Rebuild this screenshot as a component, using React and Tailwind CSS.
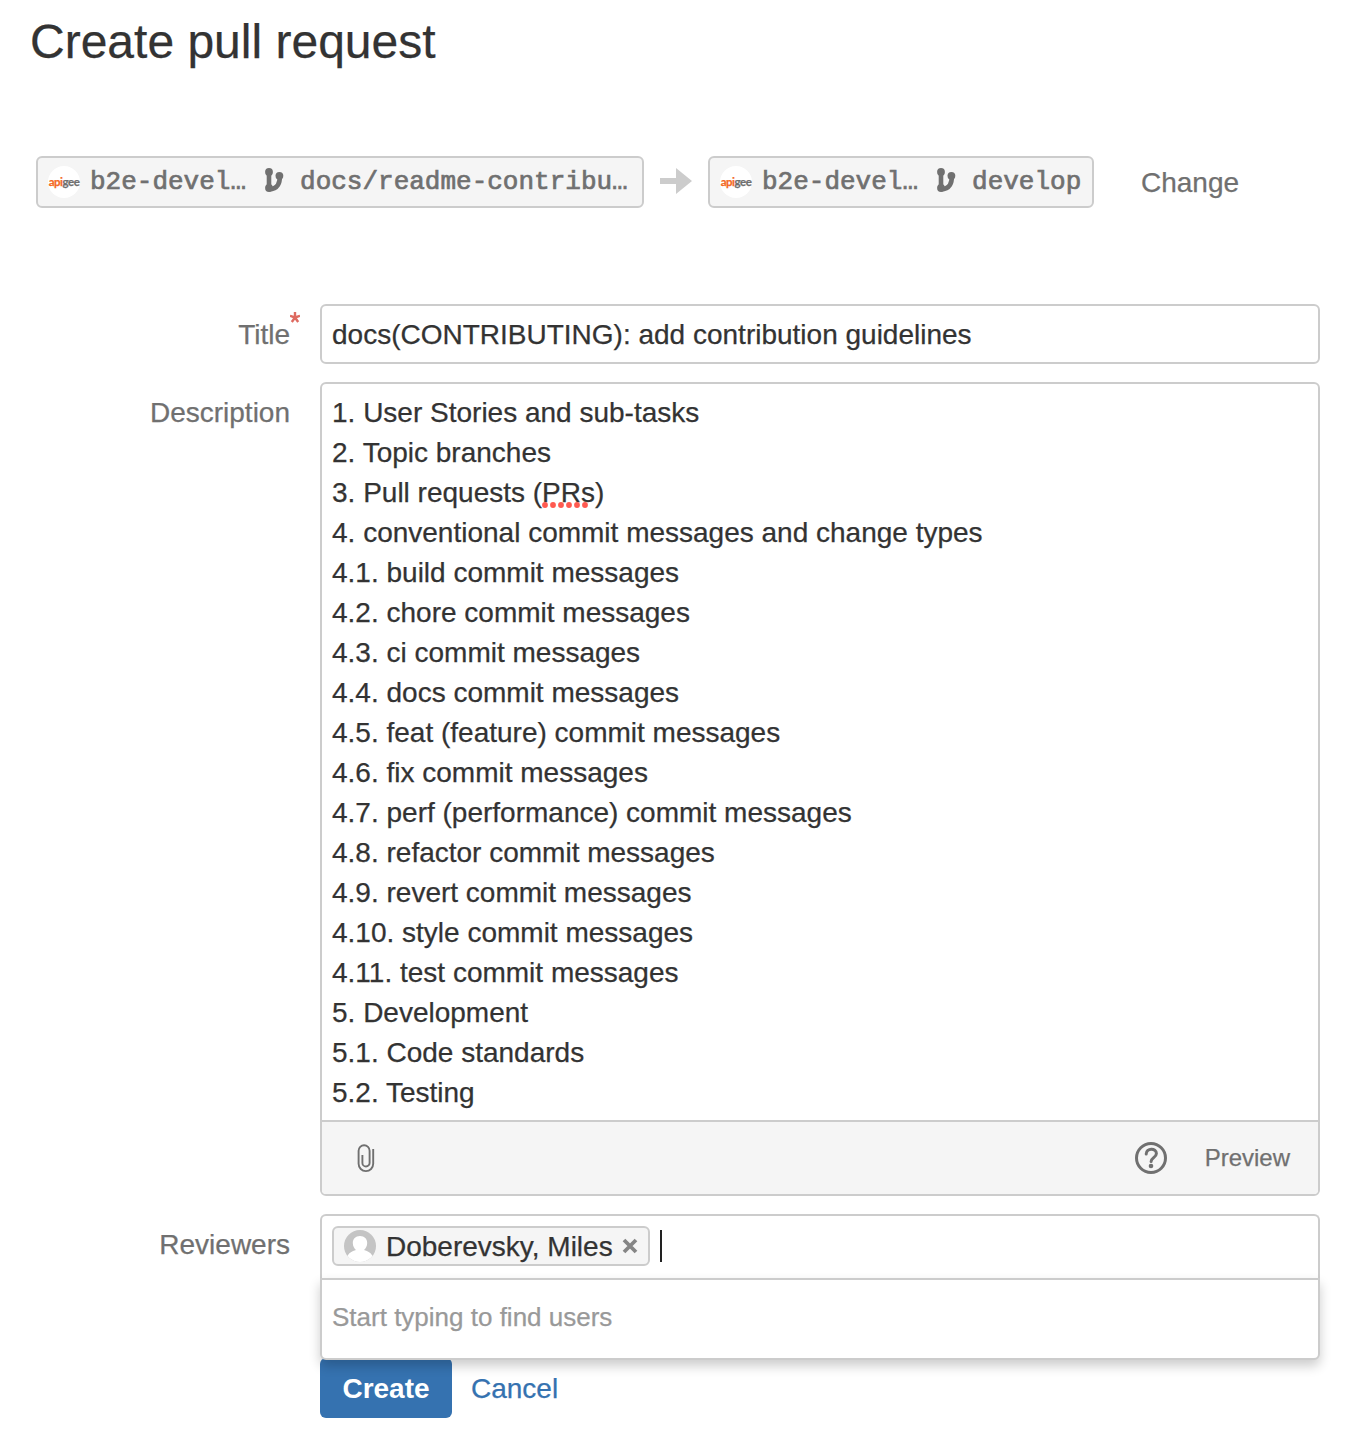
import React from "react";

const DESCRIPTION = [
  "1. User Stories and sub-tasks",
  "2. Topic branches",
  "3. Pull requests (PRs)",
  "4. conventional commit messages and change types",
  "4.1. build commit messages",
  "4.2. chore commit messages",
  "4.3. ci commit messages",
  "4.4. docs commit messages",
  "4.5. feat (feature) commit messages",
  "4.6. fix commit messages",
  "4.7. perf (performance) commit messages",
  "4.8. refactor commit messages",
  "4.9. revert commit messages",
  "4.10. style commit messages",
  "4.11. test commit messages",
  "5. Development",
  "5.1. Code standards",
  "5.2. Testing",
];

function RepoAvatar() {
  return (
    <span className="flex size-8 shrink-0 items-center justify-center rounded-full bg-white font-['Lato',sans-serif] text-[11.5px] leading-none font-bold tracking-[-0.5px] text-[#6f6f6f]">
      <span className="text-[#f4691f]">api</span>gee
    </span>
  );
}

function BranchIcon() {
  return (
    <svg className="h-6 w-5 shrink-0" viewBox="0 0 20 24" fill="none">
      <circle cx="5" cy="4" r="3.9" fill="#707070" />
      <circle cx="5" cy="20" r="3.9" fill="#707070" />
      <circle cx="15.4" cy="7.8" r="3.9" fill="#707070" />
      <path d="M5 4v16M15.800 8c.2 6.500-1.600 13.200-10.800 13.200" stroke="#707070" strokeWidth="4.6" />
    </svg>
  );
}

function BranchBox({ repo, branch, className }) {
  return (
    <div className={`flex h-[52px] items-center rounded-[6px] border-2 border-[#ccc] bg-[#f5f5f5] pl-[10px] font-['Liberation_Mono',monospace] text-[26px] leading-none whitespace-pre text-[#707070] ${className}`}>
      <RepoAvatar />
      <span className="ml-[10px] [-webkit-text-stroke:0.7px]">{repo}</span>
      <span className="mt-[-4px] ml-[18px] flex">
        <BranchIcon />
      </span>
      <span className="ml-[16px] [-webkit-text-stroke:0.7px]">{branch}</span>
    </div>
  );
}

function Label({ children, required }) {
  return (
    <div className="flex w-[290px] shrink-0 justify-end pt-[11px] leading-[40px] text-[#707070]">
      <span className="relative">
        {children}
        {required && (
          <svg className="absolute top-[-3px] left-full h-[11px] w-[10px]" viewBox="0 0 10 11" fill="none" stroke="#de6a60" strokeWidth="2.4">
            <path d="M5 5.500V0M5 5.500L0 3.800M5 5.500l5-1.700M5 5.500L1.800 10M5 5.500L8.200 10" />
          </svg>
        )}
      </span>
    </div>
  );
}

function DescriptionLine({ text }) {
  const [before, after] = text.split("PRs");
  if (after === undefined) return <div>{text}</div>;
  return (
    <div>
      {before}
      <span className="relative">
        PRs
        <svg className="absolute top-[25px] left-0 h-[6px] w-[48px]" viewBox="0 0 48 6" fill="#ff5a50">
          {[3, 11, 19, 27, 35, 43].map((x) => (
            <circle key={x} cx={x} cy="3" r="2.9" />
          ))}
        </svg>
      </span>
      {after}
    </div>
  );
}

export default function App() {
  return (
    <main className="min-h-[1436px] w-[1350px] bg-white font-['Liberation_Sans',Arial,sans-serif] text-[28px] text-[#333] [-webkit-text-stroke:0.25px]">
      <h1 className="pt-[14px] pl-[30px] text-[48px] leading-[56px]">Create pull request</h1>

      <div className="mt-[86px] flex h-[52px] items-center pl-[36px]">
        <BranchBox repo="b2e-devel…" branch="docs/readme-contribu…" className="w-[608px]" />
        <svg className="mx-4 mb-[2px] h-[26px] w-8" viewBox="0 0 32 26" fill="#ccc">
          <path d="M0 10h16V0l16 13-16 13V16H0z" />
        </svg>
        <BranchBox repo="b2e-devel…" branch="develop" className="w-[386px]" />
        <button className="mt-[1px] ml-[47px] text-[#707070]">Change</button>
      </div>

      <form className="mt-[96px] w-[1320px]">
        <div className="flex">
          <Label required>Title</Label>
          <div className="ml-[30px] h-[60px] flex-1 rounded-[6px] border-2 border-[#ccc] pt-[9px] pl-[10px] leading-[40px]">
            docs(CONTRIBUTING): add contribution guidelines
          </div>
        </div>

        <div className="mt-[18px] flex">
          <Label>Description</Label>
          <div className="ml-[30px] h-[814px] flex-1 overflow-hidden rounded-[6px] border-2 border-[#ccc]">
            <div className="h-[736px] pt-[9px] pl-[10px] leading-[40px]">
              {DESCRIPTION.map((line) => (
                <DescriptionLine key={line} text={line} />
              ))}
            </div>
            <div className="flex h-[74px] items-center border-t-2 border-[#ccc] bg-[#f5f5f5] pr-[28px] pl-[34px] text-[#707070]">
              <svg className="h-[29px] w-5" viewBox="0 0 20 29" fill="none" stroke="#707070" strokeWidth="1.9">
                <path d="M17.200 5v14.800a7.300 7.300 0 0 1-14.600 0V6.700a5.500 5.500 0 0 1 11 0v12.200a3.600 3.600 0 0 1-7.200 0V11" />
              </svg>
              <svg className="ml-auto size-8" viewBox="0 0 32 32" fill="none" stroke="#707070">
                <circle cx="16" cy="16" r="14.5" strokeWidth="3" />
                <path d="M11.2 12c0-6.300 10.200-6.300 10.200-.6 0 4-5.300 4.300-5.300 8" strokeWidth="3" strokeLinecap="round" />
                <circle cx="16" cy="24" r="2.3" fill="#707070" stroke="none" />
              </svg>
              <span className="ml-[38px] text-[24px] leading-none">Preview</span>
            </div>
          </div>
        </div>

        <div className="mt-[18px] flex">
          <Label>Reviewers</Label>
          <div className="relative z-10 ml-[30px] flex-1">
            <div className="flex h-[64px] items-center rounded-t-[6px] border-2 border-b-0 border-[#ccc] bg-white pb-[2px] pl-[10px]">
              <div className="flex h-10 w-[318px] items-center rounded-[6px] border-2 border-[#ccc] bg-[#f5f5f5] pl-[10px]">
                <svg className="size-8 shrink-0" viewBox="0 0 32 32">
                  <defs>
                    <clipPath id="avatar">
                      <circle cx="16" cy="16" r="16" />
                    </clipPath>
                  </defs>
                  <g clipPath="url(#avatar)">
                    <rect width="32" height="32" fill="#c4c4c4" />
                    <path d="M16 6c-4.500 0-7.200 3-7.200 7 0 3 1.500 5.500 3.200 7-4 1.200-7.500 3-9 7v6h26v-6c-1.500-4-5-5.800-9-7 1.700-1.500 3.200-4 3.200-7 0-4-2.700-7-7.200-7z" fill="#fff" />
                  </g>
                </svg>
                <span className="mt-px ml-[10px] whitespace-nowrap">Doberevsky, Miles</span>
                <svg className="ml-auto mr-[10px] size-4 shrink-0" viewBox="0 0 16 16" stroke="#858585" strokeWidth="3.8">
                  <path d="M2 2l12 12M14 2L2 14" />
                </svg>
              </div>
              <span className="ml-[10px] h-8 w-[2px] bg-[#222]" />
            </div>
            <div className="h-[82px] rounded-b-[6px] border-2 border-[#ccc] bg-white pt-[17px] pl-[10px] text-[26px] leading-[40px] text-[#999] shadow-[0_6px_12px_rgba(0,0,0,0.2)]">
              Start typing to find users
            </div>
          </div>
        </div>

        <div className="flex items-center pl-[320px]">
          <button type="button" className="mt-[-2px] h-[60px] w-[132px] rounded-[6px] bg-[#3572b0] pt-[2px] font-bold text-white [-webkit-text-stroke:0]">
            Create
          </button>
          <button type="button" className="ml-[19px] text-[#3572b0]">
            Cancel
          </button>
        </div>
      </form>
    </main>
  );
}
